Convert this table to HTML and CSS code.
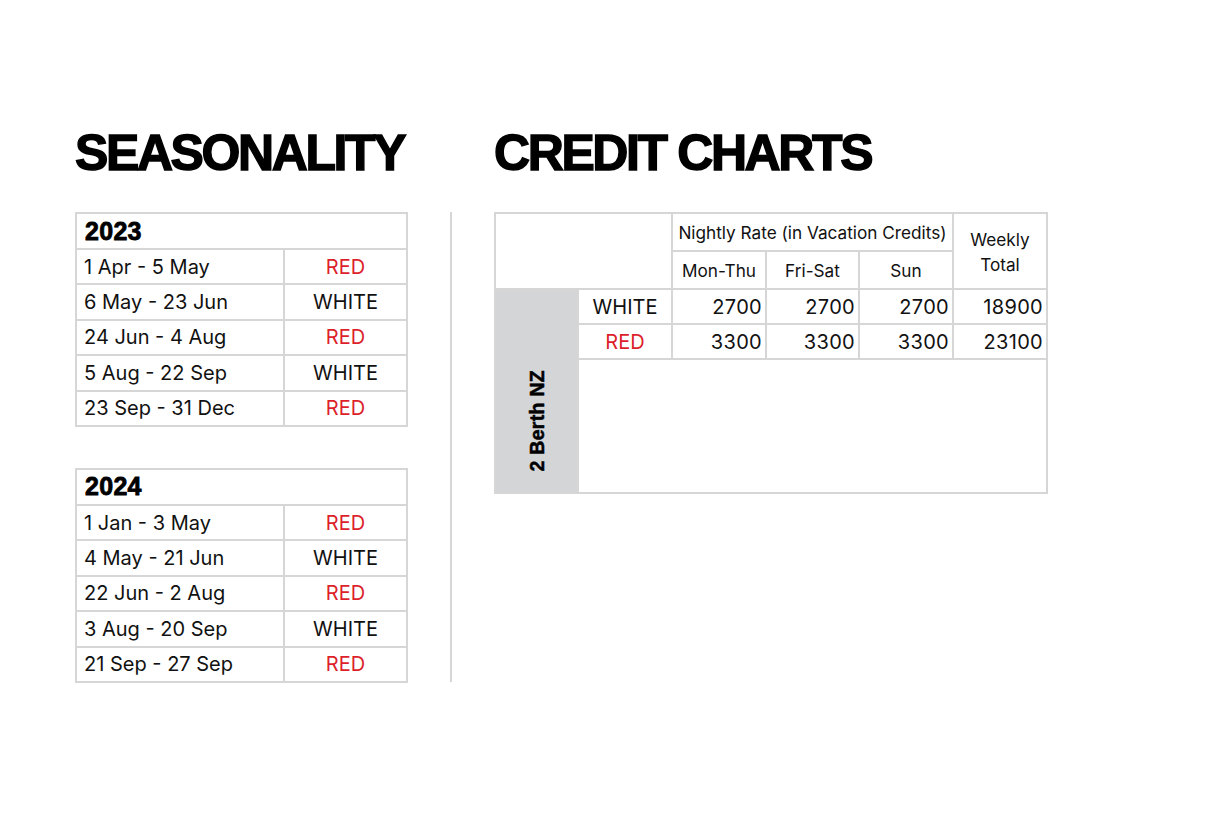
FILE: index.html
```html
<!DOCTYPE html>
<html>
<head>
<meta charset="utf-8">
<link rel="stylesheet" href="styles.css">
</head>
<body>
<div class="page">
  <h1 class="title">SEASONALITY</h1>
  <div class="spacer"></div>
  <h1 class="title">CREDIT CHARTS</h1>

  <div class="seasons">
    <table class="season">
      <colgroup><col class="c-date"><col class="c-band"></colgroup>
      <tr><th colspan="2" class="year">2023</th></tr>
      <tr><td>1 Apr - 5 May</td><td class="band red">RED</td></tr>
      <tr><td>6 May - 23 Jun</td><td class="band">WHITE</td></tr>
      <tr><td>24 Jun - 4 Aug</td><td class="band red">RED</td></tr>
      <tr><td>5 Aug - 22 Sep</td><td class="band">WHITE</td></tr>
      <tr><td>23 Sep - 31 Dec</td><td class="band red">RED</td></tr>
    </table>
    <table class="season">
      <colgroup><col class="c-date"><col class="c-band"></colgroup>
      <tr><th colspan="2" class="year">2024</th></tr>
      <tr><td>1 Jan - 3 May</td><td class="band red">RED</td></tr>
      <tr><td>4 May - 21 Jun</td><td class="band">WHITE</td></tr>
      <tr><td>22 Jun - 2 Aug</td><td class="band red">RED</td></tr>
      <tr><td>3 Aug - 20 Sep</td><td class="band">WHITE</td></tr>
      <tr><td>21 Sep - 27 Sep</td><td class="band red">RED</td></tr>
    </table>
  </div>

  <div class="divider"></div>

  <div class="charts">
    <table class="credit">
      <colgroup>
        <col class="k1"><col class="k2"><col class="k3"><col class="k4"><col class="k5"><col class="k6">
      </colgroup>
      <tr class="h1">
        <th colspan="2" rowspan="2"></th>
        <th colspan="3" class="sm">Nightly Rate (in Vacation Credits)</th>
        <th rowspan="2" class="sm weekly">Weekly<br>Total</th>
      </tr>
      <tr class="h2">
        <th class="sm">Mon-Thu</th>
        <th class="sm">Fri-Sat</th>
        <th class="sm">Sun</th>
      </tr>
      <tr class="row">
        <td rowspan="3" class="berth"><span>2 Berth NZ</span></td>
        <td class="band">WHITE</td>
        <td class="num">2700</td>
        <td class="num">2700</td>
        <td class="num">2700</td>
        <td class="num">18900</td>
      </tr>
      <tr class="row">
        <td class="band red">RED</td>
        <td class="num">3300</td>
        <td class="num">3300</td>
        <td class="num">3300</td>
        <td class="num">23100</td>
      </tr>
      <tr class="empty">
        <td colspan="5"></td>
      </tr>
    </table>
  </div>
</div>
</body>
</html>
```

FILE: styles.css
```css
html, body {
  margin: 0;
  padding: 0;
  background: #ffffff;
}

body {
  font-family: Inter, "Liberation Sans", sans-serif;
  color: #111111;
  width: 1216px;
  height: 824px;
  overflow: hidden;
}

.page {
  display: grid;
  grid-template-columns: 333px 86px 553px;
  grid-template-rows: auto auto;
  padding: 128px 0 0 75px;
}

.title {
  margin: 0;
  font-family: "Liberation Sans", Arial, sans-serif;
  font-weight: 700;
  font-size: 50px;
  line-height: 50px;
  letter-spacing: -2.4px;
  -webkit-text-stroke: 1.4px #000;
  color: #000;
  white-space: nowrap;
  height: 84px;
}

.seasons {
  display: flex;
  flex-direction: column;
  gap: 41px;
}

.divider {
  justify-self: center;
  width: 2px;
  background: #d6d6d6;
  height: 470px;
}

table {
  border-collapse: collapse;
  table-layout: fixed;
}

td, th {
  border: 2px solid #d6d6d6;
  padding: 0;
  font-weight: 400;
}

.season {
  width: 331px;
}

.c-date { width: 208px; }
.c-band { width: 123px; }

.season td {
  height: 33.4px;
  font-size: 20px;
  padding-left: 7px;
  letter-spacing: 0;
}

.season td.band {
  padding-left: 0;
  text-align: center;
}

.year {
  height: 34px;
  text-align: left;
  padding-left: 8px;
  font-family: "Liberation Sans", Arial, sans-serif;
  font-weight: 700;
  font-size: 25px;
  letter-spacing: 0.3px;
  -webkit-text-stroke: 0.8px #000;
  color: #000;
}

.red {
  color: #dc1f2b;
}

.credit {
  width: 552px;
}

.k1 { width: 83px; }
.k2 { width: 94px; }
.k3 { width: 94px; }
.k4 { width: 93px; }
.k5 { width: 94px; }
.k6 { width: 94px; }

.credit .h1 th, .credit .h2 th {
  height: 36px;
}

.sm {
  font-size: 17.2px;
  font-weight: 400;
  letter-spacing: 0;
  text-align: center;
}

.weekly {
  line-height: 25px;
  padding-top: 2px;
}

.credit .row td {
  height: 33px;
  font-size: 20px;
  letter-spacing: 0.3px;
}

.credit td.band {
  text-align: center;
  letter-spacing: 0;
}

.credit td.num {
  text-align: right;
  padding-right: 3px;
}

.credit .empty td {
  height: 132px;
}

.berth {
  background: #d4d5d7;
  vertical-align: bottom;
  text-align: center;
  padding-bottom: 15px;
}

.berth span {
  display: inline-block;
  writing-mode: vertical-rl;
  transform: rotate(180deg);
  font-family: "Liberation Sans", Arial, sans-serif;
  font-weight: 700;
  font-size: 19.5px;
  line-height: 22px;
  -webkit-text-stroke: 0.5px #000;
  color: #000;
}
```
